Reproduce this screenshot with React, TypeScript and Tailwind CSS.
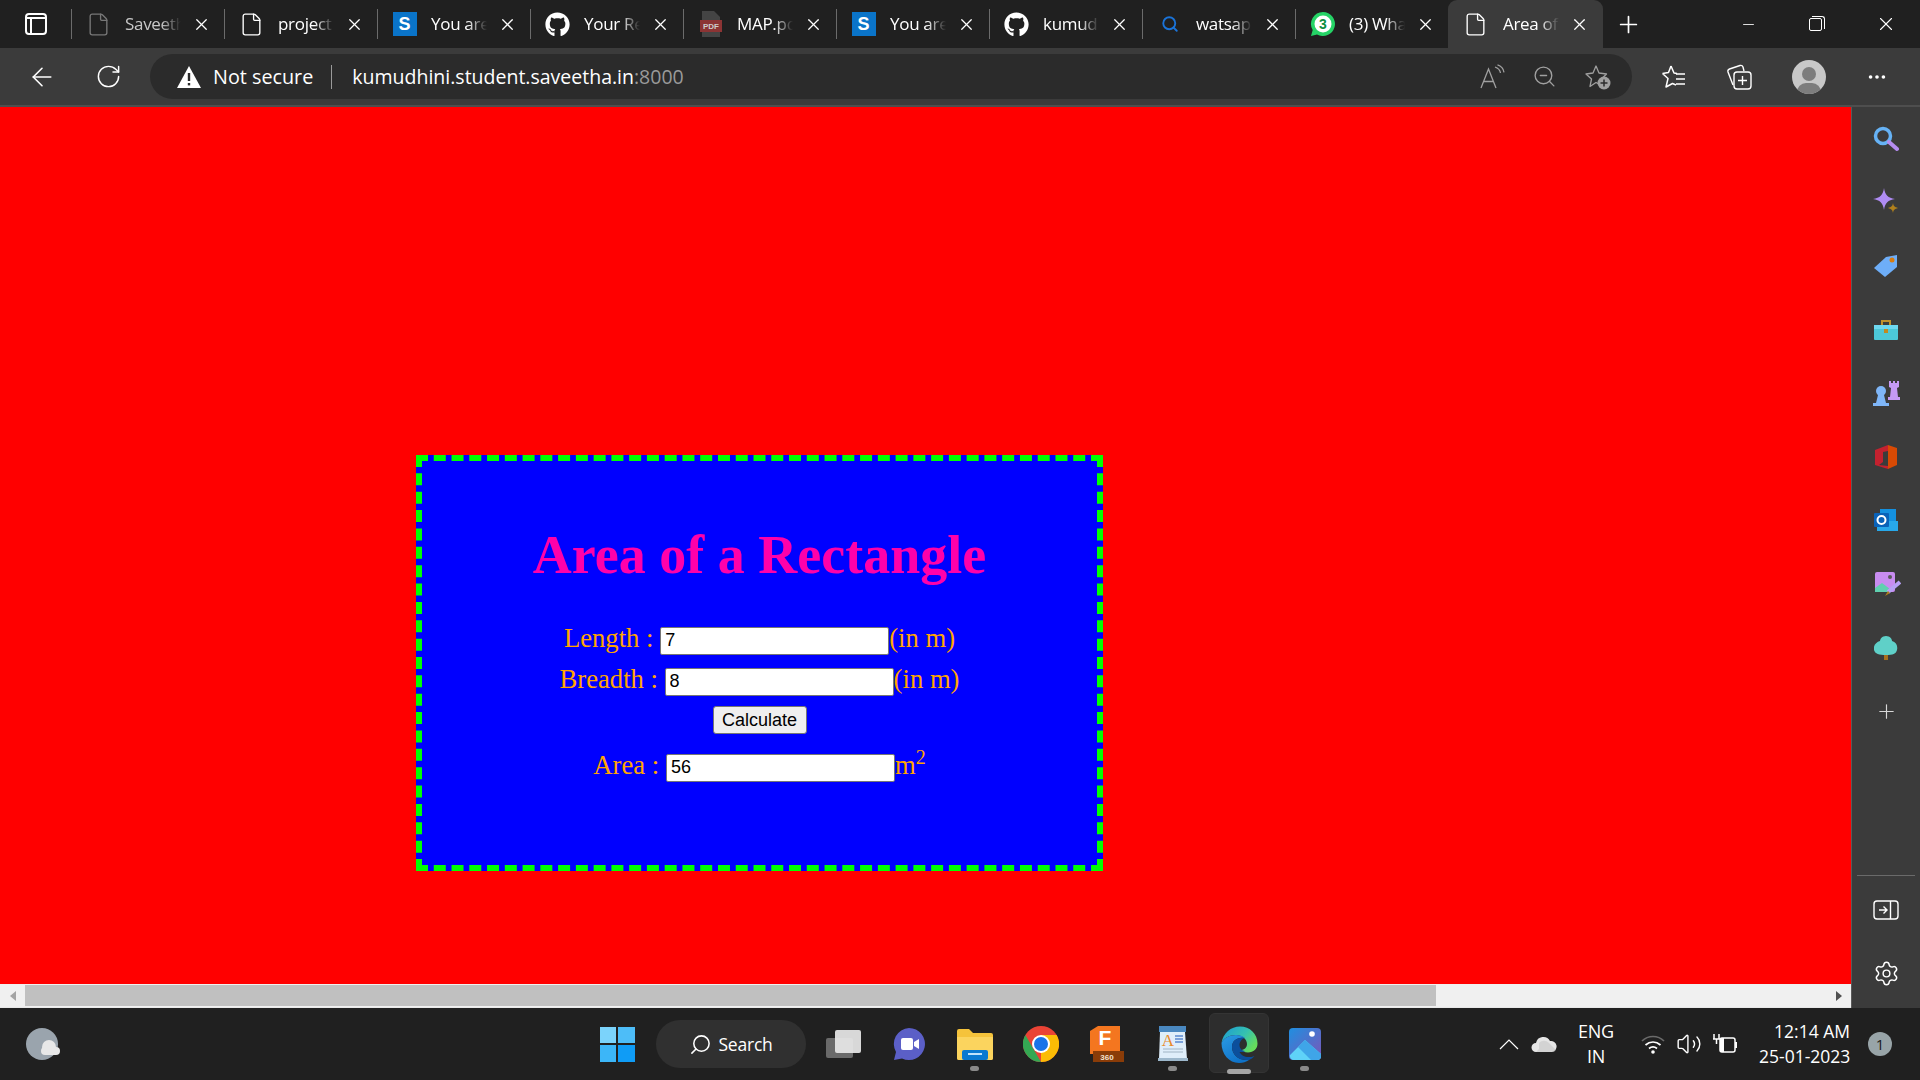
import { ArrowLeft, RotateCw, X, Plus, Minus, Search, ZoomOut, Volume2, Settings, Ellipsis, File } from 'lucide-react';
import { FaGithub } from 'react-icons/fa';

const uiFont = 'font-["Open_Sans","Noto_Sans",sans-serif]';

function SiteS() {
    return (
        <div className="w-[24px] h-[24px] bg-[#0a74c9] flex items-center justify-center text-white text-[18px] font-bold font-['Liberation_Sans',sans-serif]">
            S
        </div>
    );
}

function PdfIcon() {
    return (
        <svg width="24" height="28" viewBox="0 0 24 28">
            <path d="M3 1h12l6 6v20H3z" fill="#444" />
            <rect x="1" y="10" width="22" height="12" fill="#8c3434" />
            <text x="12" y="19" fontSize="8" fontWeight="700" textAnchor="middle" fill="#ccc" fontFamily="Liberation Sans, sans-serif">PDF</text>
        </svg>
    );
}

function WhatsappIcon() {
    return (
        <svg width="26" height="26" viewBox="0 0 26 26">
            <path d="M13 1a12 12 0 0 0-10.300 18.100L1 25l6-1.600A12 12 0 1 0 13 1z" fill="#25d366" />
            <circle cx="13" cy="13" r="8.500" fill="#fff" />
            <text x="13" y="18" fontSize="14" fontWeight="700" textAnchor="middle" fill="#0c8f42" fontFamily="Liberation Sans, sans-serif">3</text>
        </svg>
    );
}

const tabs = [
    { label: 'Saveetha', icon: <File size={25} strokeWidth={1.3} className="text-[#777]" />, dim: true },
    { label: 'project', icon: <File size={25} strokeWidth={1.3} className="text-white" /> },
    { label: 'You are', icon: <SiteS /> },
    { label: 'Your Re', icon: <FaGithub size={25} className="text-white" /> },
    { label: 'MAP.pdf', icon: <PdfIcon /> },
    { label: 'You are', icon: <SiteS /> },
    { label: 'kumudhini', icon: <FaGithub size={25} className="text-white" /> },
    { label: 'watsapp', icon: <Search size={18} strokeWidth={2.5} className="text-[#1a73d8]" /> },
    { label: '(3) What', icon: <WhatsappIcon /> },
];

function Tab({ label, icon, dim }: { label: string; icon: React.ReactNode; dim?: boolean }) {
    return (
        <div className="w-[153px] h-[48px] flex items-center shrink-0 relative">
            <div className="w-px h-[30px] bg-[#6b6b6b]" />
            <div className="w-[53px] flex justify-center shrink-0">{icon}</div>
            <div className={`w-[56px] overflow-hidden whitespace-nowrap text-[17px] tracking-[-0.3px] ${dim ? 'text-[#c8c8c8]' : 'text-white'} [mask-image:linear-gradient(to_right,black_65%,transparent)]`}>
                {label}
            </div>
            <X size={19} strokeWidth={1.6} className="text-white ml-[11px]" />
        </div>
    );
}

function TabStrip() {
    return (
        <div className={`h-[48px] bg-[#202020] flex items-center ${uiFont}`}>
            <div className="w-[71px] flex justify-center shrink-0">
                <div className="w-[22px] h-[22px] border-2 border-white rounded-[4px] flex flex-col">
                    <div className="h-[4px] border-b-2 border-white" />
                    <div className="w-[5px] flex-1 border-r-2 border-white" />
                </div>
            </div>
            {tabs.map((t, i) => (
                <Tab key={i} label={t.label} icon={t.icon} dim={t.dim} />
            ))}
            <div className="w-[155px] h-[48px] bg-[#3b3b3b] rounded-t-[9px] flex items-center shrink-0">
                <div className="w-[55px] flex justify-center shrink-0">
                    <File size={25} strokeWidth={1.3} className="text-white" />
                </div>
                <div className="w-[56px] overflow-hidden whitespace-nowrap text-[17px] tracking-[-0.3px] text-white [mask-image:linear-gradient(to_right,black_65%,transparent)]">
                    Area of a
                </div>
                <X size={19} strokeWidth={1.6} className="text-white ml-[11px]" />
            </div>
            <Plus size={27} strokeWidth={1.5} className="text-white ml-[12px]" />
            <div className="flex-1" />
            <Minus size={17} strokeWidth={1.2} className="text-white mr-[52px]" />
            <div className="relative w-[13px] h-[13px] border border-white rounded-[2px] mr-[53px]">
                <div className="absolute top-[-3px] left-[2px] w-[13px] h-[13px] border-t border-r border-white rounded-tr-[3px]" />
            </div>
            <X size={22} strokeWidth={1.2} className="text-white mr-[23px]" />
        </div>
    );
}

function Toolbar() {
    return (
        <div className={`h-[59px] bg-[#3b3b3b] border-b-2 border-[#4e4e4e] flex items-center ${uiFont}`}>
            <div className="w-[84px] flex justify-center shrink-0">
                <ArrowLeft size={30} strokeWidth={1.3} className="text-white" />
            </div>
            <div className="w-[48px] flex justify-center shrink-0">
                <RotateCw size={27} strokeWidth={1.3} className="text-white" />
            </div>
            <div className="ml-[18px] w-[1482px] h-[45px] bg-[#2b2b2b] rounded-full flex items-center pl-[26px] shrink-0">
                <svg width="26" height="24" viewBox="0 0 26 24">
                    <path d="M13 1 25 23H1z" fill="#fff" />
                    <rect x="11.800" y="8" width="2.400" height="8" fill="#2b2b2b" />
                    <rect x="11.800" y="18" width="2.400" height="2.400" fill="#2b2b2b" />
                </svg>
                <span className="ml-[11px] text-[19.800px] text-white">Not secure</span>
                <div className="ml-[18px] w-px h-[24px] bg-[#9a9a9a]" />
                <span className="ml-[20px] text-[19.500px] text-white">
                    kumudhini.student.saveetha.in<span className="text-[#9a9a9a]">:8000</span>
                </span>
                <div className="flex-1" />
                <svg width="26" height="26" viewBox="0 0 26 26" fill="none" stroke="#a0a0a0" strokeWidth="1.300">
                    <path d="M2 24 9.500 5 17 24M5 17.500h9" />
                    <path d="M16 3c3 1 5 3 5.500 6M18.500 0.800c3.500 1 6 4 6.500 7.500" />
                </svg>
                <ZoomOut size={25} strokeWidth={1.3} className="ml-[27px] text-[#a0a0a0]" />
                <div className="relative ml-[27px] mr-[21px] w-[27px] h-[27px]">
                    <svg width="27" height="27" viewBox="0 0 27 27">
                        <path d="M12 3l3 7 7.500 1-5 5 1 7-6.500-3.500L6 23.500l1.500-7.500-5.500-5 7-1z" fill="none" stroke="#a0a0a0" strokeWidth="1.300" strokeLinejoin="round" />
                        <circle cx="20" cy="20" r="6.500" fill="#a0a0a0" />
                        <path d="M16.500 20h7M20 16.500v7" stroke="#2b2b2b" strokeWidth="1.500" />
                    </svg>
                </div>
            </div>
            <div className="ml-[28px] w-[28px] h-[28px] shrink-0">
                <svg width="28" height="28" viewBox="0 0 28 28">
                    <path d="M11 3l3 7 3 .4M2.500 10.500l6-1L11 3M2.500 10.500 8 15.500 6 24l6.500-3.500L16 22" fill="none" stroke="#fff" strokeWidth="1.500" strokeLinejoin="round" />
                    <path d="M16 11h9M16 16h9M16 21h9" stroke="#fff" strokeWidth="1.500" />
                </svg>
            </div>
            <div className="ml-[38px] w-[28px] h-[28px] shrink-0">
                <svg width="28" height="28" viewBox="0 0 28 28">
                    <path d="M7 22 2 9a2.500 2.500 0 0 1 1.500-3L14 2.500a2.500 2.500 0 0 1 3 1.500l1 4" fill="none" stroke="#fff" strokeWidth="1.400" />
                    <rect x="8" y="9" width="17" height="17" rx="3" fill="none" stroke="#fff" strokeWidth="1.400" />
                    <path d="M16.500 13v9M12 17.500h9" stroke="#fff" strokeWidth="1.400" />
                </svg>
            </div>
            <div className="ml-[38px] w-[34px] h-[34px] rounded-full bg-[#c8c8c8] overflow-hidden relative shrink-0">
                <div className="absolute left-[10px] top-[7px] w-[14px] h-[14px] rounded-full bg-[#7d7d7d]" />
                <div className="absolute left-[5px] top-[23px] w-[24px] h-[18px] rounded-full bg-[#7d7d7d]" />
            </div>
            <Ellipsis size={22} className="ml-[40px] text-white" />
        </div>
    );
}

function InputField({ value }: { value: string }) {
    return (
        <input
            readOnly
            value={value}
            className="inline-block align-middle w-[229px] h-[28px] bg-white text-black border border-[#767676] rounded-[2px] px-[4px] text-[18px] font-['Liberation_Sans',sans-serif]"
        />
    );
}

function AreaCard() {
    return (
        <div className="w-[687px] h-[416px] bg-[#0000ff] border-[6px] border-dashed border-[#00ff00] text-center font-['Liberation_Serif',serif] text-[26.670px] text-[#ffa500]">
            <h1 className="mt-[63px] text-[54px] leading-[62px] font-bold text-[#ff00aa]">Area of a Rectangle</h1>
            <div className="mt-[32px] h-[41px] leading-[41px]">Length : <InputField value="7" />(in m)</div>
            <div className="h-[41px] leading-[41px]">Breadth : <InputField value="8" />(in m)</div>
            <button className="block mt-[6px] mx-auto w-[94px] h-[28px] bg-[#efefef] text-black border border-[#767676] rounded-[3px] text-[18px] font-['Liberation_Sans',sans-serif]">
                Calculate
            </button>
            <div className="mt-[11px] h-[41px] leading-[41px]">Area : <InputField value="56" />m<sup>2</sup></div>
        </div>
    );
}

function Gem({ children }: { children: React.ReactNode }) {
    return <div className="h-[63.600px] flex items-center justify-center">{children}</div>;
}

function Sidebar() {
    return (
        <div className="w-[69px] bg-[#3b3b3b] shrink-0 flex flex-col border-l border-[#5a5a5a]">
            <Gem>
                <svg width="26" height="26" viewBox="0 0 26 26">
                    <circle cx="10" cy="10" r="7.500" fill="none" stroke="#66b2f5" strokeWidth="3.500" />
                    <path d="M16 16l8 7" stroke="#b58cf0" strokeWidth="4" strokeLinecap="round" />
                </svg>
            </Gem>
            <Gem>
                <svg width="28" height="28" viewBox="0 0 28 28">
                    <path d="M12 0c1 7 4 10 11 11-7 1-10 4-11 11-1-7-4-10-11-11 7-1 10-4 11-11z" fill="#b08cf5" />
                    <path d="M21 15c.5 3 1.500 4 5 5-3.500 1-4.500 2-5 5-.5-3-1.500-4-5-5 3.500-1 4.500-2 5-5z" fill="#b0801c" />
                </svg>
            </Gem>
            <Gem>
                <svg width="26" height="24" viewBox="0 0 26 24">
                    <path d="M1 14 13 3l11-2v12L12 23z" fill="#6eaef8" />
                    <circle cx="19" cy="6" r="2.500" fill="#d87c10" />
                </svg>
            </Gem>
            <Gem>
                <svg width="26" height="24" viewBox="0 0 26 24">
                    <path d="M9 7V3h8v4" fill="none" stroke="#c0902c" strokeWidth="2" />
                    <rect x="1" y="7" width="24" height="15" rx="1" fill="#4cc8d8" />
                    <rect x="1" y="7" width="24" height="4" fill="#6ed8f0" />
                    <rect x="11" y="11" width="4" height="4" fill="#c08a20" />
                </svg>
            </Gem>
            <Gem>
                <svg width="28" height="28" viewBox="0 0 28 28">
                    <path d="M17 2h2v2h2V2h2v2h2V2h2v6l-2 1 1 9h2v3H16v-3h2l1-9-2-1z" fill="#c59af5" />
                    <circle cx="9" cy="12" r="5" fill="#7fb6f8" />
                    <path d="M6 16h6l2 8h3v3H1v-3h3z" fill="#7fb6f8" />
                </svg>
            </Gem>
            <Gem>
                <svg width="26" height="26" viewBox="0 0 26 26">
                    <path d="M15 1 2 6v15l13 4 0-3-9-1 4-3V8l5-1z" fill="#c4212f" />
                    <path d="M15 1l9 3v17l-9 4z" fill="#d84a04" />
                </svg>
            </Gem>
            <Gem>
                <svg width="26" height="24" viewBox="0 0 26 24">
                    <rect x="7" y="1" width="16" height="14" fill="#1490df" />
                    <path d="M4 13h21v10H4z" fill="#28a8ea" />
                    <rect x="1" y="5" width="15" height="14" rx="1" fill="#0a62b8" />
                    <circle cx="8.500" cy="12" r="4" fill="none" stroke="#fff" strokeWidth="2" />
                </svg>
            </Gem>
            <Gem>
                <svg width="30" height="28" viewBox="0 0 30 28">
                    <rect x="4" y="2" width="20" height="20" rx="2" fill="#c88cf0" />
                    <path d="M4 18l7-5 8 6v3H4z" fill="#5fd0b0" />
                    <circle cx="19" cy="7" r="2" fill="#5a5a5a" />
                    <path d="M29 12 17 22" stroke="#b7a0f5" strokeWidth="4" />
                    <path d="M14 26l3-5 2 2z" fill="#b0801c" />
                </svg>
            </Gem>
            <Gem>
                <svg width="24" height="26" viewBox="0 0 24 26">
                    <rect x="10" y="19" width="4" height="6" fill="#a8701c" />
                    <path d="M12 1c4 0 6 3 6 5 4 1 6 5 5 9s-4 5-11 5-11-1-12-5 2-8 6-9c0-2 2-5 6-5z" fill="#5fd0c8" />
                </svg>
            </Gem>
            <Gem>
                <Plus size={23} strokeWidth={1.2} className="text-[#d8d8d8]" />
            </Gem>
            <div className="flex-1" />
            <div className="mx-[5px] h-px bg-[#6a6a6a]" />
            <div className="h-[68px] flex items-center justify-center">
                <svg width="26" height="20" viewBox="0 0 26 20" fill="none" stroke="#fff" strokeWidth="1.400">
                    <rect x="1" y="1" width="24" height="18" rx="3" />
                    <path d="M17.500 1v18M6 10h7.500M10.500 6.500l3.500 3.500-3.500 3.500" />
                </svg>
            </div>
            <div className="h-[64px] flex items-center justify-center pb-[6px]">
                <Settings size={27} strokeWidth={1.3} className="text-white" />
            </div>
        </div>
    );
}

function PageArea() {
    return (
        <div className="flex-1 flex flex-col min-w-0">
            <div className="flex-1 bg-[#ff0000] pl-[416px] pt-[348px]">
                <AreaCard />
            </div>
            <div className="h-[24px] bg-[#f0f0f0] flex items-center border-b-[1px] border-[#e8e8e8]">
                <div className="w-[25px] flex justify-center shrink-0">
                    <div className="w-0 h-0 border-y-[5px] border-y-transparent border-r-[6px] border-r-[#a3a3a3]" />
                </div>
                <div className="w-[1411px] h-[21px] bg-[#c0c0c0] shrink-0" />
                <div className="flex-1" />
                <div className="w-[25px] flex justify-center shrink-0">
                    <div className="w-0 h-0 border-y-[5px] border-y-transparent border-l-[6px] border-l-[#505050]" />
                </div>
            </div>
        </div>
    );
}

function Taskbar() {
    const slot = 'w-[66px] h-[72px] flex items-center justify-center shrink-0 relative';
    const dot = 'absolute bottom-[9px] left-[28px] w-[9px] h-[5px] rounded-full bg-[#8a8a8a]';
    return (
        <div className={`h-[72px] bg-[#202020] flex items-center text-white ${uiFont}`}>
            <div className="w-[584px] pl-[25px] shrink-0">
                <svg width="36" height="34" viewBox="0 0 36 34">
                    <circle cx="17" cy="17" r="16" fill="#9aa4ad" />
                    <circle cx="24" cy="20" r="7" fill="#e8e8e8" />
                    <rect x="16" y="20" width="19" height="8" rx="4" fill="#e8e8e8" />
                </svg>
            </div>
            <div className={slot}>
                <div className="grid grid-cols-2 gap-[1.500px] w-[35px] h-[35px]">
                    <div className="bg-[#7bd3fb]" />
                    <div className="bg-[#4dbdf8]" />
                    <div className="bg-[#3cb6f8]" />
                    <div className="bg-[#0f9cf6]" />
                </div>
            </div>
            <div className="ml-[6px] w-[150px] h-[48px] rounded-full bg-[#303030] flex items-center justify-center shrink-0">
                <Search size={23} strokeWidth={1.6} className="-scale-x-100 mr-[6px]" />
                <span className="text-[17.500px] tracking-[-0.2px]">Search</span>
            </div>
            <div className="ml-[4px] flex">
                <div className={slot}>
                    <svg width="36" height="30" viewBox="0 0 36 30">
                        <rect x="1" y="9" width="27" height="20" rx="2" fill="#6a6a6a" />
                        <rect x="10" y="1" width="26" height="23" rx="2" fill="#e8e8e8" fillOpacity="0.92" />
                    </svg>
                </div>
                <div className={slot}>
                    <svg width="34" height="34" viewBox="0 0 34 34">
                        <path d="M17 1a16 16 0 1 1-7 30.400L2 33l2-8A16 16 0 0 1 17 1z" fill="#5b5fc7" />
                        <rect x="9" y="11" width="12" height="12" rx="2" fill="#fff" />
                        <path d="M22 15l5-3v10l-5-3z" fill="#fff" />
                    </svg>
                </div>
                <div className={slot}>
                    <svg width="36" height="32" viewBox="0 0 36 32">
                        <path d="M0 3a2 2 0 0 1 2-2h10l4 4h18a2 2 0 0 1 2 2v23a2 2 0 0 1-2 2H2a2 2 0 0 1-2-2z" fill="#f5c33b" />
                        <path d="M0 9h36v21a2 2 0 0 1-2 2H2a2 2 0 0 1-2-2z" fill="#fbd45e" />
                        <rect x="5" y="22" width="26" height="10" rx="2" fill="#0a7ad1" />
                        <rect x="11" y="25" width="14" height="2" fill="#bfe3fb" />
                    </svg>
                    <div className={dot} />
                </div>
                <div className={slot}>
                    <svg width="36" height="36" viewBox="0 0 36 36">
                        <circle cx="18" cy="18" r="18" fill="#ea4335" />
                        <path d="M2.400 9 18 36a18 18 0 0 1-15.600-27z" fill="#34a853" />
                        <path d="M18 36a18 18 0 0 0 15.600-27H18z" fill="#fbbc05" />
                        <circle cx="18" cy="18" r="9" fill="#fff" />
                        <circle cx="18" cy="18" r="7" fill="#1a73e8" />
                    </svg>
                </div>
                <div className={slot}>
                    <svg width="34" height="36" viewBox="0 0 34 36">
                        <path d="M0 5 8 0h22v28H0z" fill="#f4761f" />
                        <rect x="3" y="25" width="31" height="11" fill="#8a3c08" />
                        <text x="15" y="19" fontSize="21" fontWeight="700" textAnchor="middle" fill="#fff" fontFamily="Liberation Sans, sans-serif">F</text>
                        <text x="17" y="34" fontSize="8" fontWeight="700" textAnchor="middle" fill="#f3e3d0" fontFamily="Liberation Sans, sans-serif">360</text>
                    </svg>
                </div>
                <div className={slot}>
                    <svg width="32" height="36" viewBox="0 0 32 36">
                        <rect x="2" y="0" width="27" height="6" fill="#4a88c0" />
                        <path d="M3 6h25l2 27H2z" fill="#dfeefa" />
                        <rect x="1" y="32" width="30" height="3" fill="#9db8cc" />
                        <text x="11" y="20" fontSize="17" textAnchor="middle" fill="#e88a2a" fontFamily="Liberation Serif, serif">A</text>
                        <path d="M18 10h8M18 13h8M18 16h8" stroke="#5a88d0" strokeWidth="1.300" />
                        <path d="M6 23h20M6 26h20" stroke="#a0b4c4" strokeWidth="1" />
                    </svg>
                    <div className={dot} />
                </div>
                <div className={slot}>
                    <div className="absolute left-[3px] top-[5px] w-[60px] h-[60px] rounded-[6px] bg-[#2d2d2d] border border-[#343434]" />
                    <svg width="37" height="37" viewBox="0 0 37 37" className="relative">
                        <defs>
                            <linearGradient id="edgeTop" x1="0" y1="0" x2="1" y2="0.600">
                                <stop offset="0" stopColor="#1b9ad6" />
                                <stop offset="0.600" stopColor="#35c1b0" />
                                <stop offset="1" stopColor="#66dc5c" />
                            </linearGradient>
                            <linearGradient id="edgeLow" x1="0" y1="0" x2="0.600" y2="1">
                                <stop offset="0" stopColor="#2b9be4" />
                                <stop offset="1" stopColor="#0f72c8" />
                            </linearGradient>
                        </defs>
                        <path d="M.5 17C2 7 10 .5 19 .5 29 .5 36.500 8 36.500 17.500c0 5.500-4 9-9.500 9-3.500 0-5.500-1-6.500-2.500 3.500-.5 5.500-3 5.500-6 0-5-5-9-11-9C8.500 9 2.500 12 .5 17z" fill="url(#edgeTop)" />
                        <path d="M.5 17c2-5 8-8 14.500-8 4 0 7 1 9 3-7-1.500-13 2-13 9 0 7 6 14 17 13-3 2-6 3-10 3C8 37 .5 28 .5 17z" fill="url(#edgeLow)" />
                        <path d="M24 12c-7-1.500-13 2-13 9 0 7 6 14 17 13 2-1 4-2 5.500-4-2 1-4 1-6 1-4 0-7.500-2-9-5 3 0 4 0 6-1-1.500 0-6-1-6-6 0-3 2-6 5.500-7z" fill="#0b4f9c" />
                    </svg>
                    <div className="absolute bottom-[6px] left-[21px] w-[24px] h-[5px] rounded-full bg-[#a5a5a5]" />
                </div>
                <div className={slot}>
                    <svg width="33" height="33" viewBox="0 0 33 33">
                        <defs>
                            <linearGradient id="photoBg" x1="0" y1="0" x2="1" y2="1">
                                <stop offset="0" stopColor="#1f8fe0" />
                                <stop offset="1" stopColor="#7c55b8" />
                            </linearGradient>
                        </defs>
                        <rect width="32" height="32" rx="4" fill="url(#photoBg)" />
                        <path d="M1 27 16 12l16 14v2a4 4 0 0 1-4 4H5a4 4 0 0 1-4-5z" fill="#5fd2f8" />
                        <path d="M16 12l16 14v2a4 4 0 0 1-4 4h-6L9 19z" fill="#3fa5e8" />
                        <circle cx="23" cy="6" r="2.800" fill="#fff" />
                    </svg>
                    <div className={dot} />
                </div>
            </div>
            <div className="ml-[153px] flex items-center shrink-0">
                <svg width="20" height="12" viewBox="0 0 20 12" className="ml-[8px]" fill="none" stroke="#fff" strokeWidth="1.200">
                    <path d="M1 11 10 2l9 9" />
                </svg>
                <svg width="26" height="18" viewBox="0 0 26 18" className="ml-[12px]">
                    <path d="M5 17a4.500 4.500 0 0 1 0-9 7.500 7.500 0 0 1 14-2 5.500 5.500 0 0 1 2 11z" fill="#e6e6e6" />
                    <path d="M8 8c3-3 7-3 10 0l7 7-2 2H5l3-3z" fill="#bdbdbd" fillOpacity="0.45" />
                </svg>
                <div className="ml-[19px] w-[40px] text-center text-[18px] leading-[25px] tracking-[-0.2px]">ENG<br />IN</div>
                <svg width="24" height="20" viewBox="0 0 24 20" fill="none" strokeWidth="1.700" className="ml-[25px]">
                    <path d="M1 7c6-6 16-6 22 0" stroke="#6a6a6a" />
                    <path d="M4.500 11c4.500-4 10.500-4 15 0M8 14.500c2.500-2 5.500-2 8 0" stroke="#fff" />
                    <circle cx="12" cy="18" r="1.800" fill="#fff" />
                </svg>
                <Volume2 size={26} strokeWidth={1.3} className="ml-[11px]" />
                <svg width="26" height="24" viewBox="0 0 26 24" className="ml-[10px]">
                    <rect x="8" y="6" width="15" height="14" rx="2" fill="none" stroke="#fff" strokeWidth="1.500" />
                    <rect x="23" y="10" width="2" height="6" fill="#fff" />
                    <rect x="8" y="6" width="4" height="14" fill="#fff" />
                    <path d="M2 2v5M7 2v5M1 7h7M4.500 7v5" stroke="#fff" strokeWidth="1.500" />
                </svg>
                <div className="ml-[21px] w-[91px] text-right text-[17.500px] leading-[25px] whitespace-nowrap">12:14 AM<br />25-01-2023</div>
                <div className="ml-[18px] w-[24px] h-[24px] rounded-full bg-[#98a4a8] text-[#1a1a1a] text-[15px] flex items-center justify-center">1</div>
            </div>
        </div>
    );
}

export default function App() {
    return (
        <div className="w-[1920px] h-[1080px] overflow-hidden flex flex-col">
            <TabStrip />
            <Toolbar />
            <div className="flex-1 flex min-h-0">
                <PageArea />
                <Sidebar />
            </div>
            <Taskbar />
        </div>
    );
}
